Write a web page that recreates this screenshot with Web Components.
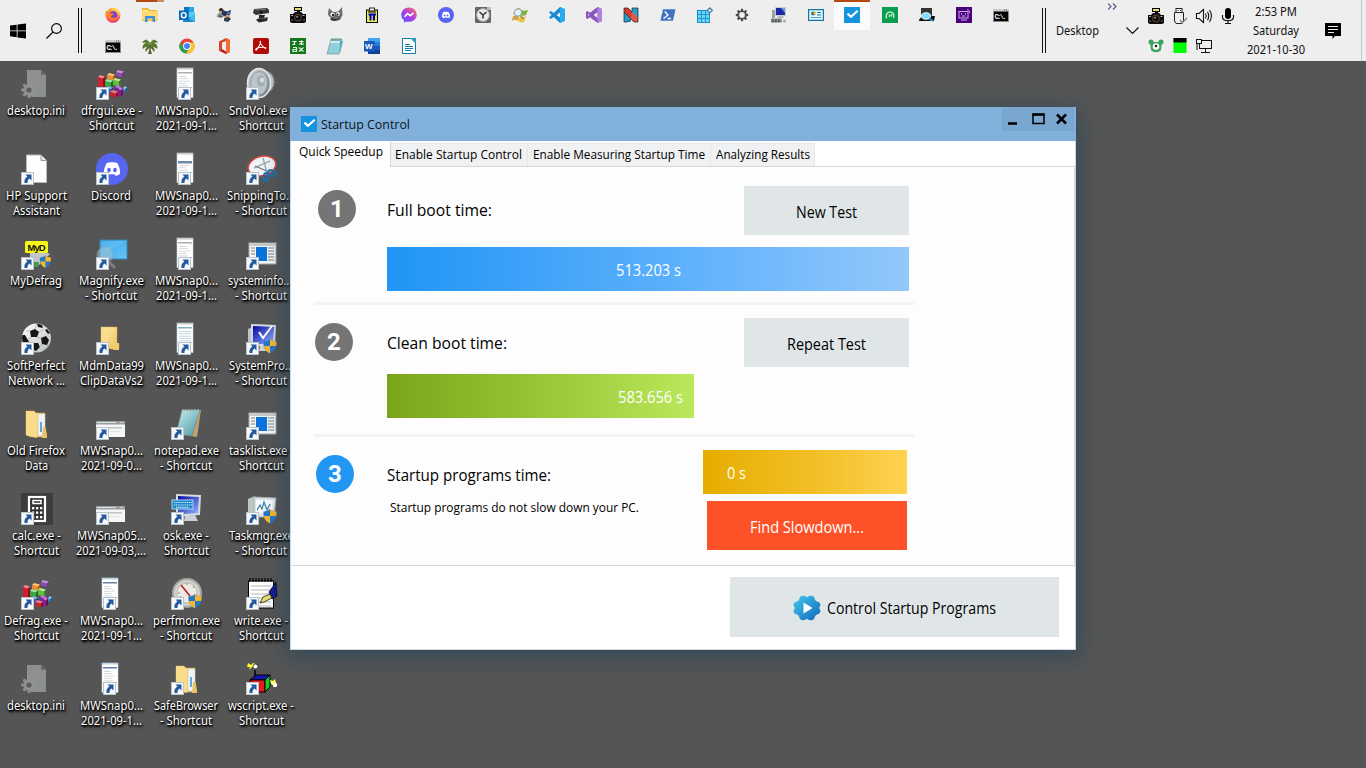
<!DOCTYPE html>
<html lang="en">
<head>
<meta charset="utf-8">
<title>Desktop</title>
<style>
html,body{margin:0;height:100%;overflow:hidden}
body{font-family:"Noto Sans","Open Sans",sans-serif;font-size:12px;background:#555}
</style>
</head>
<body>
<desk-top>
  <task-bar slot="bar"></task-bar>
  <icon-grid></icon-grid>
  <app-window slot="window" heading="Startup Control">
    <tab-strip slot="tabs"></tab-strip>
    <step-row style="--top:19px;--gap:12px;--bottom:11px;--nudge:4px">
      <step-badge slot="badge" style="--lift:-3px">1</step-badge>
      <fit-text slot="label" w="105" style="margin-top:-2px">Full boot time:</fit-text>
      <flat-button slot="action" style="--w:165px"><fit-text w="61">New Test</fit-text></flat-button>
      <time-bar slot="bar" style="--from:#2095f5;--mid:#5cb0fc;--to:#93c8fb;justify-content:center"><fit-text w="65">513.203 s</fit-text></time-bar>
    </step-row>
    <step-row style="--top:13px;--gap:7px;--bottom:16px;--nudge:1px">
      <step-badge slot="badge" style="--lift:-2px">2</step-badge>
      <fit-text slot="label" w="120">Clean boot time:</fit-text>
      <flat-button slot="action" style="--w:165px"><fit-text w="79">Repeat Test</fit-text></flat-button>
      <time-bar slot="bar" style="--from:#7aa51b;--mid:#9bc93a;--to:#bbe85c;width:307px;justify-content:flex-end;padding-right:11px"><fit-text w="65">583.656 s</fit-text></time-bar>
    </step-row>
    <result-row>
      <step-badge slot="badge" style="background:#2196f3">3</step-badge>
      <fit-text slot="label" w="164">Startup programs time:</fit-text>
      <fit-text slot="note" w="249">Startup programs do not slow down your PC.</fit-text>
      <time-bar style="--from:#e6ad00;--mid:#f3bf27;--to:#ffd250;width:204px;padding-left:24px"><fit-text w="19">0 s</fit-text></time-bar>
      <flat-button style="--w:200px;background:#fd5227;color:#fff"><fit-text w="114">Find Slowdown...</fit-text></flat-button>
    </result-row>
    <flat-button slot="footer" style="--w:329px;height:60px"><app-icon name="gearplay" size="28"></app-icon><fit-text w="169">Control Startup Programs</fit-text></flat-button>
  </app-window>
</desk-top>

<script>
/* ---------- icon artwork ---------- */
const rect=(x,y,w,h,f,e='')=>`<rect x="${x}" y="${y}" width="${w}" height="${h}" fill="${f}" ${e}/>`;
const path=(d,f,e='')=>`<path d="${d}" fill="${f}" ${e}/>`;
const line=(d,s,w=1,e='')=>`<path d="${d}" fill="none" stroke="${s}" stroke-width="${w}" ${e}/>`;
const circ=(x,y,r,f,e='')=>`<circle cx="${x}" cy="${y}" r="${r}" fill="${f}" ${e}/>`;
const grad=(id,a,b,v=1)=>`<linearGradient id="${id}" x1="0" y1="0" x2="${v?1:0}" y2="1"><stop offset="0" stop-color="${a}"/><stop offset="1" stop-color="${b}"/></linearGradient>`;
const shield=`<g transform="translate(17,15)">${path('M7 1C9 3 11 3 13.500 3.500C14 9 12 13 7 15.500C2 13 0 9 .5 3.500C3 3 5 3 7 1Z','#2478c8')}${path('M7 1C9 3 11 3 13.500 3.500C13.600 5 13.500 6.500 13.100 8H7ZM7 8V15.500C3.500 13.800 1.500 11.500 .8 8Z','#f7b62c')}</g>`;
const gearPath=(cx,cy,r,n,ri)=>{let p='';for(let i=0;i<n;i++){const a=i/n*2*Math.PI-Math.PI/2,s=Math.PI/n;
  [[-.62,ri],[-.42,r],[.42,r],[.62,ri]].forEach(([t,q])=>{p+=(p?'L':'M')+(cx+Math.cos(a+t*s)*q).toFixed(2)+' '+(cy+Math.sin(a+t*s)*q).toFixed(2)});}return p+'Z';};
const discordFace=path('M5 4.600C6.500 4 9.500 4 11 4.600C12.200 6.500 12.700 8.500 12.600 10.700C11.700 11.500 10.800 11.800 10 11.900L9.400 11H6.600L6 11.900C5.200 11.800 4.300 11.500 3.400 10.700C3.300 8.500 3.800 6.500 5 4.600Z','#fff')+`<ellipse cx="6.300" cy="8.600" rx="1.050" ry="1.250" fill="#5865f2"/><ellipse cx="9.700" cy="8.600" rx="1.050" ry="1.250" fill="#5865f2"/>`;
const cmd=rect(.5,2.500,15,12,'#000','stroke="#8a8a8a" stroke-width="1"')+rect(0,2,16,2.500,'#c8ccd0')+rect(11,2.500,1,1,'#555')+rect(13,2.500,1,1,'#555')+`<text x="1.500" y="11.500" font-family="Liberation Mono" font-size="7" font-weight="bold" textLength="12" fill="#fff">C:\\.</text>`;
const camera=rect(4,0,8,4,'#000')+rect(5,1,6,2,'#e5dc72')+rect(7,4,3,2,'#000')+path('M0 7H3L5 5H11L13 7H16V15L14 16H2L0 15Z','#0c0a0a')+circ(8,10.500,4,'#4a3530')+circ(8,10.500,2.600,'#080808')+circ(7.200,9.700,1,'#a49b94')+rect(1,8,2,1,'#aaa')+rect(12.500,8,2,1,'#bbb')+rect(1.500,12,1,2,'#777')+rect(13.500,12,1,2,'#777');
const thumb=(kind)=>{let s=rect(6,0,16,29.500,'#fff')+rect(6,0,16,29.500,'none','stroke="#ccd3d8" stroke-width=".6"');
  const hue={a:'#9a9c9e',b:'#476b91',c:'#999',d:'#5f9fb0',e:'#3e5f91'}[kind];
  s+=rect(6,0,16,1.500,kind=='e'?'#bcd5ee':'#c5cace')+rect(7,kind=='b'?8:4,14,kind=='b'?2.500:1.500,hue,'opacity=".8"');
  for(let y=kind=='b'?12:8;y<28;y+=2.400)s+=rect(8,y,kind=='d'?12:(y*7%5+6),.7,kind=='d'?'#7fb6c3':'#aeb3b8','opacity=".75"');
  return s+rect(16,19,5,1,'#8cb8dc');};
const wide=rect(0,13,29,16,'#f5f6f6')+rect(0,13,29,3.500,'#989da1')+rect(1,14,19,1,'#dce1e4')+rect(24,14,3,1,'#e5c6c0')+rect(3,19,23,1.500,'#bfc4c7')+rect(4,23,20,.6,'#ddd');
const cube=(x,y,w,h,a,b,c)=>path(`M${x} ${y}l${w} 1.500v${h}l${-w} -1.500Z`,a)+path(`M${x} ${y}l2 -2l${w} 1.500l-2 2Z`,b)+path(`M${x+w} ${y+1.500}l2 -2v${h}l-2 2Z`,c);
const blocks=cube(20,4,6,3.500,'#8d4bab','#c58be0','#6a3385')+cube(11,7,6,4,'#ee8a2b','#ffc27a','#b65b12')+cube(2,9,5,11,'#d01f2c','#f58a8e','#8e0f19')+cube(9,13,6,5,'#36a83f','#9ce59f','#1c6c28')+cube(17,12,6,5,'#5fbf3a','#b6ec92','#348321')+cube(10,20,5,5,'#2458c8','#7ea9f4','#123082')+cube(19,19,4,8,'#6a2aa0','#b27be0','#431a70')+cube(14,24,6,4,'#c4242b','#f07a7a','#86121a')+cube(22,21,3,6,'#8a1f8f','#d56ad8','#5d1261')+cube(27,20,2,2.500,'#2d8fd0','#86cdf4','#195f96')+cube(8,26,3,3,'#157f86','#5cc4c8','#0b5257');
const winDoc=rect(3,5,27,21,'#f6f6f6','stroke="#a8a8a8"')+rect(3,5,27,3,'#c9c9c9')+rect(10,9,11,14,'#0a74dc')+line('M5 10H9M5 13H9M5 16H9M22 10H28M22 13H28M22 16H28M22 19H28M22 22H28','#6e7d88',1);
const folder=(open)=>grad('fo','#ffe9a2','#edc35f')+(open?path('M5 3H13L15 5H24V29H10L5 27Z','url(#fo)','stroke="#d7aa48" stroke-width=".5"')+path('M17 6H24V28H17Z','#eef3f6','stroke="#b9b9a8" stroke-width=".4"')+rect(19,14,2,10,'#65a5d8')+path('M5 3L16 6V30L5 27Z','#f8dc8b')+path('M22 19H24.500L26 27V30H21Z','#e9c468'):path('M5 4H21V24L23 21V26H15L5 24Z','url(#fo)','stroke="#d7aa48" stroke-width=".5"')+path('M5 4L12 8V26L5 24Z','#f8dc8b')+path('M19 20H23V27H17Z','#f0cb70'));
const ini=`<g opacity=".63">${path('M6 2H20L25 7V29H10L6 24Z','#b0b2b3')}${path('M20 2V7H25','#70767a')}</g>${path(gearPath(8,22,8,8,5.800),'#8f9394','opacity=".95"')}${circ(8,22,2.600,'#5c5c5c')}`;
const monitor=grad('mo','#0505a5','#96baff')+path('M5 1L30 2L29 22L5 24Z','#d5dadd')+path('M7 3L28 4L27 20L7 21.500Z','url(#mo)')+path('M14 23L24 22L27 28H13Z','#ccd2d5');
const I={
win:path('M0 2.600 6.700 1.700V7.500H0ZM7.500 1.600 16 .4V7.500H7.500ZM0 8.300H6.700V14.200L0 13.300ZM7.500 8.300H16V15.600L7.500 14.400Z','#000'),
search:`<circle cx="10.500" cy="5.500" r="4.900" fill="none" stroke="#000" stroke-width="1.100"/>`+line('M6.900 9.100 .5 15.500','#000',1.200),
firefox:grad('ff','#ffcf2e','#f42c72',0)+circ(8,8.400,7.400,'url(#ff)')+path('M7 .5C4 2 3 4 3 6L1 3.500C.3 6 .2 9 1.500 11Z','#ff8a24')+circ(8.200,8.200,3.900,'#7a3fce')+path('M3 8C4 5.500 8 6 9 7L6 9.500C7 11.600 10.500 11.300 12 9.500C12 12.500 9.500 14 7.300 13.800C4.500 13.400 2.500 11 3 8Z','#ff7b24')+path('M10 1C13 3 15.500 6 15 10C14.500 5 10 5 10 1Z','#ffe14c'),
explorer:path('M0 1H6L8 3H15V14H0Z','#efb52f')+rect(0,4,16,9,'#ffda6d')+rect(1,3,5,1,'#fff4ca')+path('M3 15V9H13V15H10.500V11.500H5.500V15Z','#3c91dc'),
outlook:rect(5,0,10,12,'#26a5e9')+rect(5,0,5,5,'#1175c5')+rect(10,5,6,5,'#55cdf5')+path('M4 8L10 12L16 7V15H4Z','#3ab9ed')+path('M4 8V15H15Z','#1e86cb')+rect(0,3.500,9.500,9.500,'#0869b9')+`<ellipse cx="4.700" cy="8.200" rx="2.300" ry="2.600" fill="none" stroke="#fff" stroke-width="1.400"/>`,
people:circ(5,3.500,2.300,'#c98345')+path('M2.500 3 5 .8 8 3 5 4Z','#26282f')+path('M1 7 6 5 8 8 3 9Z','#8a8f92')+path('M6 3 11 4.500 15 3 14 8 10 10 6 8Z','#23375c')+path('M0 9 4 8 8 9 5 11Z','#5c6063')+circ(11.500,9.500,2,'#d09a68')+path('M8 11 13 10 15 12 12 15 8 14Z','#39404c')+circ(12.500,6,1.300,'#5c82c8'),
webcam:path('M1 2 14 1 16 3V6L3 8 0 6Z','#353535')+path('M2 3 13 2.500','#777','stroke="#777"')+circ(8,5,2,'#111','stroke="#666" stroke-width=".5"')+path('M6 8H12L11 10.500H15L14 14 6 15.500 3 13 6 11Z','#272727')+path('M6 11.500H13','none','stroke="#777" stroke-width=".6"'),
camera,
gimp:path('M1 6 2 1 6 5 11 5 15 0 15.500 8 13 13 6 14 2 11Z','#716d64')+circ(5.500,7.500,2.500,'#fff','stroke="#222" stroke-width=".5"')+circ(11,7,2.300,'#fff','stroke="#222" stroke-width=".5"')+circ(6,8,1.200,'#222')+circ(10.500,7.500,1.100,'#222')+path('M0 8 3 10 5 12 2 12Z','#f0f0ec')+path('M4 11C8 13 12 12 13 10 13 13 7 16 3 12Z','#34322f'),
mwsnap:rect(2.500,3,11,12.500,'#f0f04a','stroke="#000" stroke-width="1"')+rect(5.500,1,5,3,'#ececec','stroke="#000" stroke-width=".8"')+path('M4 5H12','none','stroke="#000"')+path('M4.500 6.500H12V8.500H11V13.500H8.800V8.500H7.500V13.500H5.500V8.500H4.500Z','#0000be'),
messenger:`<linearGradient id="ms2" x1=".1" y1="1" x2=".9" y2="0"><stop offset="0" stop-color="#4a5cff"/><stop offset=".45" stop-color="#a63bef"/><stop offset="1" stop-color="#ff6b68"/></linearGradient>`+path('M8 .5C3.500 .5 .3 3.700 .3 7.700C.3 10 1.300 12 3 13.300V15.700L5.300 14.500C10.800 16 15.700 12.500 15.700 7.700C15.700 3.700 12.500 .5 8 .5Z','url(#ms2)')+line('M3.500 9.800 6.500 6.600 9.300 8.700 12.500 5.800','#fff',1.600),
discord:circ(8,8,8,'#5865f2')+`<g transform="translate(1.100 1.100) scale(.86)">${discordFace}</g>`,
clock:rect(0,0,16,16,'#666','rx="1"')+circ(8,8,6.500,'#e9e9e9','stroke="#9b9b9b"')+line('M4.500 5 8 8 11.500 5M8 8V11.500','#333',1.500)+rect(12,0,4,3,'#bbb'),
winold:path('M3 3C5 1 7 1 9 2L8 7C6 6 4 6 1 7Z','#e06e38')+path('M9.500 3C12 4 13 4 16 3L14 8C12 9 10 9 8 8Z','#7ab52f')+path('M1 9C4 8 5 8 7 9L6 14C4 12 2 13 0 14Z','#d0a24a')+path('M8 9C11 11 12 10 14 9L12 15C10 16 8 15 6 14Z','#edc337')+circ(6,5.500,3.600,'#e6f3fb','stroke="#8ea9bf"')+line('M8.500 8.500 11.500 12','#888',1.500),
vscode:path('M11 0 16 2.200V13.800L11 16 0 5.500 1.800 4 11 10.500V5.500L1.800 12 0 10.500Z','#168bd5')+path('M11 0 16 2.200V13.800L11 16Z','#2caaf0'),
vs:path('M11.500 0 16 2V14L11.500 16 4 10.200 1.500 12 0 11V5L1.500 4 4 5.800ZM2 6.500V9.500L3 8ZM11.500 5 7.700 8 11.500 11Z','#8c57bd','fill-rule="evenodd"')+path('M11.500 0 16 2V14L11.500 16Z','#b17fe0'),
nri:path('M1 1H5L15 11V15H11L1 5Z','#d93a2f')+path('M9 1H15V11L9 5Z','#2a9cc9')+path('M1 5 8 12V15H1Z','#2a9cc9')+path('M9 5 15 11V15H11L8 12Z','#e2584b')+line('M1 1H5L9 5V1H15V15H11L8 12 1 5ZM1 5V15H4L8 12','#222',.7),
ps:path('M3 2.300H15.500L13 13.700H.4Z','#4273c3')+line('M4.700 4.500 8 8 3.500 11.500M7.500 11.500H11','#fff',1.300),
grid:rect(0,3,13,13,'#128acb')+[1,5,9].map(x=>[4,8,12].map(y=>rect(x,y,3.200,3.200,'#69d4f2')).join('')).join('')+path('M12.800 .8 15.300 3.300 12.800 5.800 10.300 3.300Z','#eee','stroke="#3b789d" stroke-width="1.200"'),
gear:path(gearPath(8,8,6.300,8,4.700),'#4b4b4b')+circ(8,8,2.900,'#eee'),
pc:path('M4 0H15V9H4Z','#c5cbce')+rect(5,1,9,7,'#1829a6')+path('M10 1H14V6Z','#7395dd')+rect(1,3,3,8,'#9aa2a6')+path('M7 9H12L13 11H6Z','#b5babd')+rect(0,11.500,11,4,'#8e9494')+[1,4,7].map(x=>rect(x,12.500,1.800,1,'#3a3a3a')+rect(x,14.200,1.800,1,'#3a3a3a')).join('')+circ(13.500,14,1.600,'#aaa'),
card:rect(.5,2.500,15,11,'#9fdcf4','stroke="#1d719b"')+rect(2,4,12,8,'#e6f7fd')+circ(5,6.500,2,'#2d719b')+path('M5 6.500 8 4V8Z','#ffc829')+rect(9,5,4,1,'#287fa8')+rect(9,7.500,4,1,'#287fa8')+rect(3,10,10,1,'#53a4c4'),
check:rect(0,0,16,16,'#1593df')+line('M3.500 6.600 7 9.800 13.700 3.800','#fff',2.200),
green:rect(0,0,16,16,'#0a9d50')+line('M4.500 11.500C3.500 7 5.500 5 8 5C11 5 12.500 7.500 11.500 11M7.500 7.500V10M9.500 7V9.500','#b4ebc9',1.500),
scanner:path('M2 1H13V10H2Z','#333')+path('M0 13 3 9H16L15 14H0Z','#111')+`<ellipse cx="7" cy="9" rx="4.500" ry="3.200" fill="#8ad8f7" stroke="#e6fbff"/>`+line('M10 11.500 14 14','#2ba4d8',1.600),
purple:rect(0,0,16,16,'#49007b')+rect(3,4.500,9,6.500,'none','stroke="#d4a7ee"')+line('M5.500 6V7.500M9.500 6V7.500M5.500 9H9.500M5 13H11M11 2.500C13 3 13.500 4 13.500 6','#d4a7ee',1),
cmd,
palm:path('M7 8H9L8.700 12 10 16H6L7.300 12Z','#6d562f')+path('M8 5C5 0 1 2 0 5C2 4 3 4 4 5C1 6 0 9 1 11C3 9 4 9 5 9C3 11 3 13 4 14C5 12 7 10 8 9C9 10 11 12 12 14C13 13 13 11 11 9C13 9 14 10 15 11C16 9 15 6 12 5C13 4 15 4 16 5C15 2 11 0 8 5Z','#4e6e2a')+line('M1 4 8 6 15 4M4 1 8 6 12 1M2 9 8 6 14 9','#859a49',.7),
chrome:circ(8,8,7.600,'#e5453a')+path('M1.200 4.500A7.600 7.600 0 0 0 7 15.600L10.900 9.900 8 8 5 9.500Z','#23a455')+path('M14.700 4.500A7.600 7.600 0 0 1 7.200 15.600L11.300 8.500 8.500 4.500Z','#fbc42e')+circ(8,8,3.900,'#fff')+circ(8,8,3,'#4285f4'),
office:path('M3 3.500 10 0 14 2V14L10 16 3 12.500 10 13.500V3L6 4.500V11L3 12.500Z','#df411d')+path('M10 0 14 2V14L10 16Z','#f56b37')+path('M3 12.500 6 11 10 13.500V16Z','#b6231c'),
acrobat:rect(0,0,16,16,'#b10b05','rx="2"')+line('M3 12C6 9 8 5 7.500 3.500C6.500 3 7.500 8 12.500 10.500C14 9 7 8.500 3.500 10.500C2 12 3 13 4 11','#fff',1.100),
sheet:rect(0,0,16,16,'#16781d')+line('M2.500 3.500H6.500M4.500 3.500V6.500H2.500M9 3.500H13.500M9 6H14M11.500 2.500V7','#fff',1.200)+line('M3 9.500H6.500V13.500H3V11.500H6.500M9 9.500 13.500 13.500M13.500 9.500 9 13.500','#ddf0df',1.200),
note:path('M4 1H15L12 16H0Z','#8fcfd9','stroke="#668d91" stroke-width=".6"')+path('M4 3H14L13 5H3Z','#cbeff1')+line('M5 .5V3M7 .5V3M9 .5V3M11 .5V3M13 .5V3','#707676',.7)+path('M13 3H16L13 15Z','#59a4b2'),
word:rect(4,0,12,4,'#41a5ee')+rect(4,4,12,4,'#2b7cd3')+rect(4,8,12,4,'#185abd')+rect(4,12,12,4,'#103f91')+rect(0,3,10.500,10.500,'#185abd')+`<text x="1" y="11" font-family="Liberation Sans" font-weight="bold" font-size="8" fill="#fff">W</text>`,
writer:path('M1.500 .5H10L14.500 5V15.500H1.500Z','#fff','stroke="#137da4"')+path('M10 0 15 5V0Z','#2797ba')+line('M4 6.500H9M4 8.500H12M4 10.500H12M4 12.500H10','#137da4',1),
usb:rect(4,.5,6,4,'#fff','stroke="#222" stroke-width="1"')+path('M2.500 4.500H11.500V13L10 15.500H4L2.500 13Z','none','stroke="#222" stroke-width="1"')+rect(5.500,2,1,1,'#222')+rect(8,2,1,1,'#222')+line('M8 12 10.500 14.500 15 10','#777',1.200),
speaker:line('M.5 5.500H3L7.500 1.500V14.500L3 10.500H.5ZM9.500 5.500C10.500 7 10.500 9 9.500 10.500M11.500 3.700C13 6 13 10 11.500 12.300M13.500 2C16 5.500 16 10.500 13.500 14','#111',1.100),
mic:rect(5,0,6,11,'#000','rx="3"')+line('M2.500 7V9C2.500 14 13.500 14 13.500 9V7M8 12V15.500M5 15.500H11','#111',1.200),
bear:circ(3,4,2.500,'#3ba25a')+circ(13,4,2.500,'#3ba25a')+path('M2 4H14L13 12C11 15 5 15 3 12Z','#3ca45d')+circ(8,8.500,3.300,'#fff')+circ(8,8,1.200,'#111'),
led:rect(1.500,0,13,15,'#00ff00')+rect(1.500,0,13,4.500,'#000'),
net:rect(3.500,2.500,12,8,'#eee','stroke="#111"')+line('M9.500 11V14M5 14.500H14','#111')+rect(.5,1.500,5,4,'#eee','stroke="#111"')+line('M1 5.500V12','#111'),
bubble:path('M0 0H16V13H10L7.500 16V13H0Z','#000')+line('M3 3.500H13M3 6.500H13M3 9.500H9','#eee',1.200),
gearplay:grad('gp','#42c8ec','#1267bd')+path('M14 3.400C15.500 1 20.500 1.300 21.300 3.500C22 6 22.500 7.400 25 7.800C28 9 28 11.500 26 14C28 16.500 28 19 25 20.200C22.500 20.600 22 22 21.300 24.500C20.500 26.700 15.500 27 14 24.600C12.500 27 7.500 26.700 6.700 24.500C6 22 5.500 20.600 3 20.200C0 19 0 16.500 2 14C0 11.500 0 9 3 7.800C5.500 7.400 6 6 6.700 3.500C7.500 1.300 12.500 1 14 3.400Z','url(#gp)')+path('M10.500 8.500 19.500 14 10.500 19.500Z','#fff'),
/* 32px desktop art */
ini,dfrg:blocks,
ta:thumb('a'),tb:thumb('b'),tc:thumb('c'),td:thumb('d'),te:thumb('e'),wide,
sound:grad('so','#dfe4e8','#68747d')+`<ellipse cx="20" cy="14" rx="8.500" ry="11" fill="#98a2a8"/><ellipse cx="22" cy="14" rx="6" ry="9" fill="#b9c1c6" stroke="#78838a"/>`+`<ellipse cx="13" cy="15" rx="11.500" ry="14.500" fill="url(#so)" stroke="#e3e7e9" stroke-width="1.500"/><ellipse cx="13" cy="15" rx="8.500" ry="11.500" fill="#bac5cc" stroke="#7f8c94" stroke-width=".7"/><ellipse cx="15" cy="13" rx="4" ry="5.500" fill="#9eabb3"/><circle cx="16" cy="12" r="2.500" fill="#d3dbe0"/>`,
doc:path('M5.500 2H20L25.500 7.500V29.500H5.500Z','#fdfdfd','stroke="#b9b9b9"')+path('M20 2V7.500H25.500','#e7e7e7','stroke="#9a9a9a"'),
bigdiscord:circ(16,16,16,'#5865f2')+`<g transform="translate(2 2) scale(1.750)">${discordFace}</g>`,
snip:`<ellipse cx="16" cy="13" rx="14" ry="9.500" fill="#f2f3f4" stroke="#db4c49" stroke-width="1.500" transform="rotate(-15 16 13)"/>`+line('M8 15 24 8M17 5 21 20','#9daeb5',1.500)+line('M9 13 23 19','#6c7c84',1.300)+`<ellipse cx="20" cy="24" rx="2.500" ry="4" fill="none" stroke="#1d71ad" stroke-width="2" transform="rotate(10 20 24)"/><ellipse cx="26" cy="20" rx="4" ry="2.500" fill="none" stroke="#1d71ad" stroke-width="2" transform="rotate(25 26 20)"/>`,
myd:path('M9 14 17 11 29 16 18 27 9 25Z','#bfc5c8')+path('M9 24H18L17 29H9Z','#429b47')+rect(4,3,23,12,'#f7f817','rx="1.500"')+`<text x="6.500" y="12.500" font-family="Liberation Sans" font-size="9.500" font-weight="bold" textLength="18" fill="#111">MyD</text><g transform="translate(4 4) scale(.85)">${shield}</g>`,
magnify:grad('ma','#36a2e4','#68c6fa')+rect(4,2,27,19,'url(#ma)','stroke="#3989b8"')+path('M5 3H30L5 18Z','#93dcff','opacity=".25"')+circ(9,17,8,'#a2c2d1','opacity=".55" stroke="#9aaab3"')+line('M13 24 19 30','#777f86',3),
sys:winDoc,
ball:grad('ba','#ffffff','#b9bcbe')+circ(15.500,15,14.500,'url(#ba)')+path('M9 8 14 6 18 9 16 14 10 14ZM1.500 12 4 12 8 19 5 23 2 20 1 15ZM20 15 25 13 28 17 26 22 21 21ZM12 20 17 20 19 24 15 28 11 26ZM16 .6 21 2 22 5 17 4ZM26 6 29 10 27 11 24 7Z','#151515')+line('M14 6 16 1M18 9 23 6M16 14 20 15M10 14 7 18M9 8 5 8M21 21 18 24M12 20 8 19M26 22 27 24','#a0a3a5',.7),
folder:folder(0),folderopen:folder(1),
spro:path('M2 6 9 3V23H2Z','#c0c5c8')+monitor+line('M13 9 17 15 26 3','#fff',2)+shield,
bignote:grad('bn','#cbedf1','#4896a1')+path('M12 2H30L26 29 6 26Z','#c5a26c')+path('M11 2H29L21 28 5 26Z','url(#bn)','stroke="#5f8488" stroke-width=".6"')+line('M12 1V4M15 1V4M18 1V4M21 1V4M24 1V4M27 1V4','#bac4c5'),
calc:rect(0,0,32,32,'#3c3c3c')+rect(8,4,16,24,'#333','stroke="#fff" stroke-width="2.200"')+rect(12,7.500,8,3,'none','stroke="#fff" stroke-width="1.500"')+[11,15,19].map(x=>[14,18.500,23].map(y=>rect(x,y,2.300,2.300,'#fff')).join('')).join(''),
osk:monitor+rect(1,7,21,9,'#1c85cb','stroke="#d3efff" stroke-width=".8"')+line('M3 9.500H21M3 12H21M5 14.300H18','#d8f3ff',1.200,'stroke-dasharray="1.300 .8"'),
taskmgr:path('M2 6 9 3V23H2Z','#c0c5c8')+path('M8 4 30 5 28 24 8 24Z','#e1e5e7','stroke="#a4acae"')+path('M10 7H27L26 20H10Z','#f6fafc')+line('M11 17 14 12 16 16 18 9 21 17 24 11','#4782ab',1.300)+shield,
perf:circ(16,15,14,'#cfd0ce','stroke="#a9a89f" stroke-width="2"')+circ(16,15,10,'#eceae4','stroke="#c6c0b4"')+line('M10 7 19 18','#c4272b',1.800)+line('M9 20 10 18M7 15H9M16 5V7M23 8 22 10','#8f8b82')+shield,
write:rect(2.500,3,25,27,'#fff','stroke="#000" stroke-width="1"')+line('M5 8H25M5 12H25M5 16H25M5 20H25M5 24H25M5 28H25','#a5a5a5',.8)+line('M4 0V4M7 0V4M10 0V4M13 0V4M16 0V4M19 0V4M22 0V4M25 0V4','#000',1.200)+path('M23 14 30 4 31 18 26 21Z','#171a92','stroke="#000" stroke-width=".7"')+path('M14 25 17 19 24 16 26 20 18 24Z','#e9dd72','stroke="#000" stroke-width=".7"'),
wscript:path('M4 17 10 12H24L19 17Z','#1515b0','stroke="#000"')+rect(4,17,15,12,'#ef1717','stroke="#000"')+path('M19 17 24 12V24L19 29Z','#17c92a','stroke="#000"')+line('M9 13V7','#000',1.500)+path('M2 0 5 2 7 0 10 1V5L6 4 3 7 4 4 1 4Z','#fff92d')+circ(9.500,3.500,2.500,'#fff','stroke="#111" stroke-width=".7"')+path('M24 17 27 18 29 16 30 20 28 23 25 21Z','#ffff55')+circ(29,22,2.200,'#fff')
};

/* ---------- helpers ---------- */
const define=(name,html,ready)=>customElements.define(name,class extends HTMLElement{
  constructor(){super();const t=document.createElement('template');t.innerHTML=html;this.attachShadow({mode:'open'}).append(t.content.cloneNode(true));}
  connectedCallback(){if(ready)ready.call(this,this.shadowRoot);}
});

define('app-icon',`<style>:host{display:block;flex:none;width:var(--s,16px);height:var(--s,16px)}svg{display:block;width:100%;height:100%;overflow:visible}</style><div></div>`,function(r){
  const s=+this.getAttribute('size')||16,n=this.getAttribute('name');
  this.style.setProperty('--s',s+'px');
  r.querySelector('div').innerHTML=`<svg viewBox="0 0 ${s} ${s}">${I[n]||''}</svg>`;
});

/* keeps a run of text at a set advance width; measured once every font style is in place */
const fits=[];
define('fit-text',`<style>:host{display:inline-block;white-space:nowrap;flex:none}span{display:inline-block;transform-origin:0 50%}</style><span><slot></slot></span>`,function(){
  this.style.width=this.getAttribute('w')+'px';
  fits.push(this);
});
const fitAll=()=>fits.map(e=>[e,e.shadowRoot.querySelector('span')]).map(([e,s])=>[e,s,s.offsetWidth&&s.getBoundingClientRect().width]).forEach(([e,s,n])=>{
  if(n)s.style.transform=`scaleX(${(e.getAttribute('w')/n).toFixed(4)})`;
});

define('flat-button',`<style>:host{display:flex;align-items:center;justify-content:center;gap:6px;box-sizing:border-box;width:var(--w);height:49px;padding-top:2px;background:#e0e6e8;color:#000;font-size:16px}</style><slot></slot>`);
define('time-bar',`<style>:host{display:flex;align-items:center;box-sizing:border-box;height:44px;padding-top:2px;color:#fff;font-size:15.500px;background:linear-gradient(90deg,var(--from),var(--mid) 55%,var(--to))}</style><slot></slot>`);
define('step-badge',`<style>:host{display:flex;align-items:center;justify-content:center;width:38px;height:38px;border-radius:50%;background:#757575;color:#fff;font:bold 24px/38px Roboto,sans-serif;margin-top:var(--lift,0)}</style><slot></slot>`);
define('step-row',`<style>:host{display:block;box-sizing:border-box;width:600px;margin-left:23px;padding:var(--top) 5px var(--bottom) 0;border-bottom:3px solid #f3f3f3;font-size:16px}
.head{display:grid;grid-template-columns:73px 1fr auto;align-items:center;margin-bottom:var(--gap)}.b{padding-left:var(--nudge)}</style>
<div class="head"><div class="b"><slot name="badge"></slot></div><slot name="label"></slot><slot name="action"></slot></div><div style="padding-left:73px"><slot name="bar"></slot></div>`);
define('result-row',`<style>:host{display:grid;grid-template-columns:73px 1fr auto;box-sizing:border-box;width:600px;margin-left:23px;padding:13px 7px 0 0;font-size:16px}
.b{padding:5px 0 0 2px}.l{padding-top:13px;line-height:24px}.n{font-size:12.500px;padding:13px 0 0 3px;line-height:16px}.r{display:flex;flex-direction:column;align-items:flex-end;gap:7px}</style>
<div class="b"><slot name="badge"></slot></div><div class="l"><slot name="label"></slot><div class="n"><slot name="note"></slot></div></div><div class="r"><slot></slot></div>`);

define('tab-strip',`<style>:host{display:flex;height:26px;box-sizing:border-box;background:#fff;font-size:12.500px;align-items:stretch;border-bottom:1px solid #d4d6d8}
div{box-sizing:border-box;margin-top:2px;background:#f0f1f2;border:1px solid #e4e6e8;border-width:1px 1px 0 0;line-height:22px}
.on{margin:0 0 -1px;background:#fdfdfd;border-color:#d4d6d8;border-top-color:#fff;width:100px;padding-left:8px;line-height:20px}</style>
<div class="on"><fit-text w="84">Quick Speedup</fit-text></div>
<div style="width:137px;padding-left:4px"><fit-text w="127">Enable Startup Control</fit-text></div>
<div style="width:183px;padding-left:5px"><fit-text w="172">Enable Measuring Startup Time</fit-text></div>
<div style="width:104px;padding-left:5px"><fit-text w="94">Analyzing Results</fit-text></div>`);

define('app-window',`<style>:host{display:flex;flex-direction:column;box-sizing:border-box;width:786px;height:543px;background:#fff;color:#000;box-shadow:0 5px 22px 2px rgba(28,66,92,.62);border:solid #cdd6dc;border-width:0 1px 1px;font-family:"Open Sans",sans-serif}
header{display:flex;height:34px;margin:0 -1px;background:#81b0da;align-items:center;padding-left:11px;font-size:13.500px;color:#0b1626;flex:none}
header fit-text{margin-left:4px;flex:none}.c{margin-left:auto;margin-right:2px;width:72px;height:24px;background:#79a7cf;align-self:flex-start}
.c svg{display:block}main{flex:none;height:398px;background:#fdfdfd;border-right:1px solid #d8dadd;border-bottom:1px solid #d4d6d8;overflow:hidden}
footer{flex:1;display:flex;justify-content:flex-end;padding:11px 16px 0 0}</style>
<header><app-icon name="check"></app-icon><fit-text w="89"></fit-text><div class="c"><svg width="72" height="24"><path d="M6 16.500H15" stroke="#000" stroke-width="2.500"/><rect x="31" y="7.500" width="11" height="9" fill="none" stroke="#000" stroke-width="1.500"/><path d="M30.300 7.500H42.700" stroke="#000" stroke-width="2.500"/><path d="M55 7.500 64 16.500M64 7.500 55 16.500" stroke="#000" stroke-width="2.500"/></svg></div></header>
<slot name="tabs"></slot><main><slot></slot></main><footer><slot name="footer"></slot></footer>`,function(r){
  r.querySelector('header fit-text').textContent=this.getAttribute('heading');
});

define('desk-icon',`<style>:host{display:block;width:75px;height:85px;color:#fff}
.i{position:relative;width:32px;height:32px;margin-left:21px}.a{position:absolute;top:19px}
.t{display:flex;flex-direction:column;align-items:center;margin:3px 2px 0 -1px;line-height:15px;font-size:12px;text-shadow:1px 1px 2px #000,0 1px 2px #000,1px 2px 3px #000}</style><div class="i"></div><div class="t"></div>`,function(r){
  const [name,arrow,...lines]=this.data;
  r.querySelector('.i').innerHTML=`<app-icon size="32" name="${name}"></app-icon>`+(arrow<0?'':`<svg class="a" style="left:${arrow}px" width="13" height="13" viewBox="0 0 13 13"><rect x=".5" y=".5" width="12" height="12" fill="#f7f9fb" stroke="#b8c3cc"/><path d="M4.500 2.500H10.500V8.500L8.500 6.600C6.600 8 6.500 9.500 6.500 11H3.500C3 8 4.200 6 6.400 4.600Z" fill="#245a9c"/></svg>`);
  r.querySelector('.t').innerHTML=lines.map(([t,w])=>`<fit-text w="${w}">${t}</fit-text>`).join('');
});

const S=['Shortcut',45],D=['- Shortcut',52],M=['MWSnap0...',63],N=['2021-09-1...',61];
const ICONS=[
['ini',-1,['desktop.ini',58]],['dfrg',0,['dfrgui.exe -',61],S],['ta',7,M,N],['sound',0,['SndVol.exe -',65],S],
['doc',0,['HP Support',61],['Assistant',47]],['bigdiscord',0,['Discord',40]],['tb',7,M,N],['snip',0,['SnippingTo...',68],D],
['myd',0,['MyDefrag',52]],['magnify',0,['Magnify.exe',65],D],['tc',7,M,N],['sys',0,['systeminfo....',67],D],
['ball',0,['SoftPerfect',58],['Network ...',57]],['folder',0,['MdmData99',65],['ClipDataVs2',63]],['td',7,M,N],['spro',0,['SystemPro...',65],D],
['folderopen',-1,['Old Firefox',58],['Data',23]],['wide',0,M,['2021-09-0...',61]],['bignote',0,['notepad.exe',65],D],['sys',0,['tasklist.exe -',65],S],
['calc',0,['calc.exe -',49],S],['wide',0,['MWSnap05...',69],['2021-09-03,...',70]],['osk',0,['osk.exe -',46],S],['taskmgr',0,['Taskmgr.exe',65],D],
['dfrg',0,['Defrag.exe -',64],S],['te',7,M,N],['perf',0,['perfmon.exe',67],D],['write',0,['write.exe -',54],S],
['ini',-1,['desktop.ini',58]],['te',7,M,N],['folderopen',0,['SafeBrowser',64],D],['wscript',0,['wscript.exe -',66],S]];
define('icon-grid',`<style>:host{display:grid;grid-template-columns:repeat(4,75px);grid-auto-rows:85px;padding-top:7px}</style>`,function(r){
  ICONS.forEach(d=>{const e=document.createElement('desk-icon');e.data=d;r.append(e);});
});

const R1='firefox explorer outlook people webcam camera gimp mwsnap messenger discord clock winold vscode vs nri ps grid gear pc card check green scanner purple cmd'.split(' ');
const R2='cmd palm chrome office acrobat sheet note word writer'.split(' ');
define('task-bar',`<style>:host{display:flex;height:61px;background:#eee;align-items:center;color:#111;font-size:12px}
.st{display:flex;gap:20px;padding-left:10px;width:68px;flex:none}
.sep{width:2px;height:45px;border:solid #111;border-width:0 1px;flex:none}
.apps{display:grid;grid-template-columns:repeat(25,37px);grid-template-rows:30px 31px;width:925px;margin:0 23px 0 12px;height:61px;flex:none}
.apps div{display:flex;align-items:center;justify-content:center}
.apps .on{background:#fafafa;box-shadow:inset 0 2px #b5480f;width:36px}.apps .run{background:linear-gradient(90deg,#b5480f 76%,#cf8965 76%) 5px 0/28px 2px no-repeat}
.desk{margin-left:10px;width:52px;flex:none}.chev{width:32px;height:61px;flex:none}
.tray{display:grid;grid-template-columns:repeat(4,24px);grid-template-rows:31px 30px;justify-items:center;align-items:center;margin-left:4px;flex:none;height:61px}
.clock{display:flex;flex-direction:column;align-items:center;line-height:19px;width:74px;margin-left:-1px;flex:none}
.n{margin-left:12px;flex:none}.end{margin-left:20px;width:1px;height:61px;background:#c9c9c9;flex:none}</style>
<div class="st"><app-icon name="win"></app-icon><app-icon name="search"></app-icon></div><div class="sep"></div>
<div class="apps"></div><div class="sep"></div>
<div class="desk"><fit-text w="43">Desktop</fit-text></div>
<svg class="chev" viewBox="0 0 32 61"><path d="M0 3.500 3 6.500 0 9.500M5 3.500 8 6.500 5 9.500" stroke="#55558c" fill="none" stroke-width="1.100"/><path d="M18.500 27.500 24.500 33.500 30.500 27.500" stroke="#111" fill="none" stroke-width="1.200"/></svg>
<div class="tray">${['camera','usb','speaker','mic','bear','led','net'].map(n=>`<app-icon name="${n}"></app-icon>`).join('')}</div>
<div class="clock"><fit-text w="42">2:53 PM</fit-text><fit-text w="46">Saturday</fit-text><fit-text w="58">2021-10-30</fit-text></div>
<app-icon class="n" name="bubble"></app-icon><div class="end"></div>`,function(r){
  const cell=(n,row,i)=>`<div style="grid-area:${row}/${i+1}" class="${row==1&&n=='check'?'on':n=='explorer'?'run':''}"><app-icon name="${n}"></app-icon></div>`;
  r.querySelector('.apps').innerHTML=R1.map((n,i)=>cell(n,1,i)).join('')+R2.map((n,i)=>cell(n,2,i)).join('');
});

define('desk-top',`<style>:host{display:flex;flex-direction:column;position:relative;width:1366px;height:768px;overflow:hidden;background:#555}
slot[name=bar]::slotted(*){flex:none}slot[name=window]::slotted(*){position:absolute;left:290px;top:107px}</style><slot name="bar"></slot><slot></slot><slot name="window"></slot>`);
fitAll();
</script>
</body>
</html>
